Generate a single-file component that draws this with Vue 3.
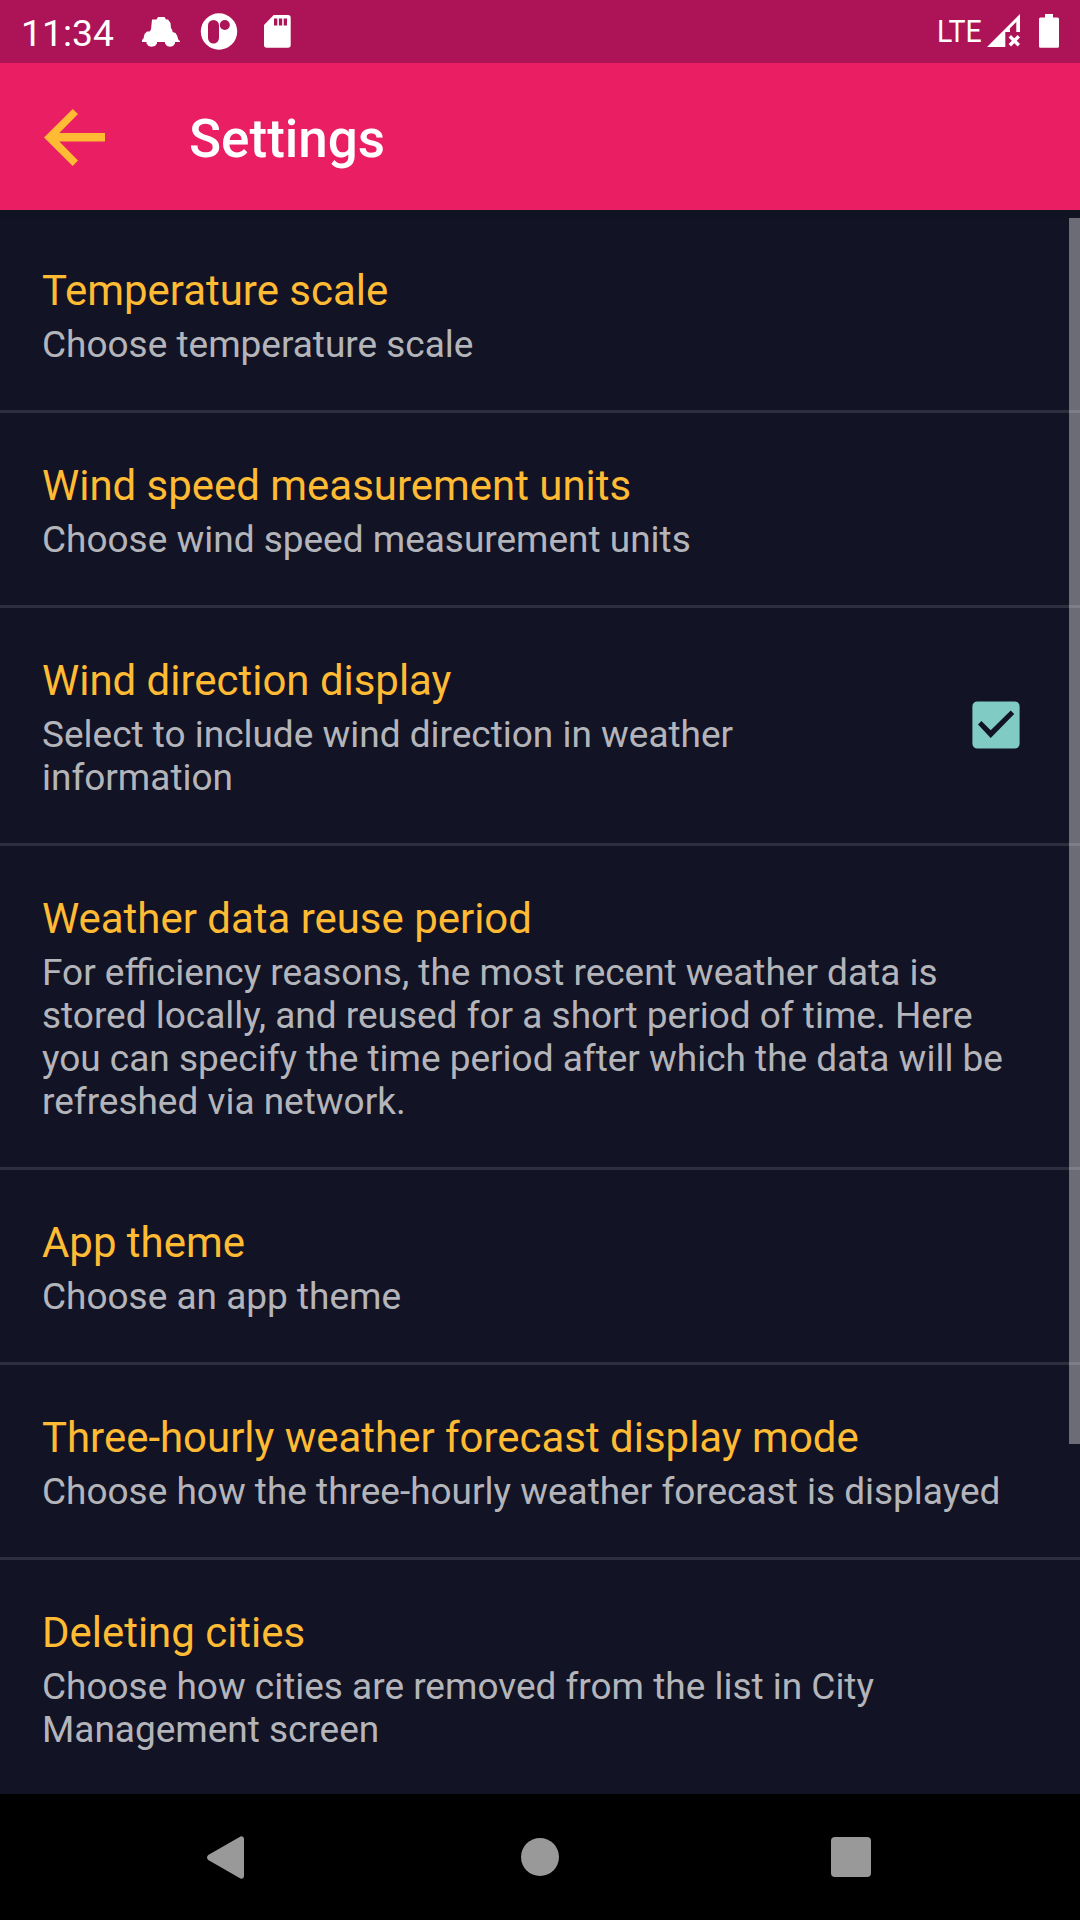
<script setup>
const settings = [
  { title: 'Temperature scale', lines: ['Choose temperature scale'] },
  { title: 'Wind speed measurement units', lines: ['Choose wind speed measurement units'] },
  {
    title: 'Wind direction display',
    lines: ['Select to include wind direction in weather', 'information'],
    checked: true
  },
  {
    title: 'Weather data reuse period',
    lines: [
      'For efficiency reasons, the most recent weather data is',
      'stored locally, and reused for a short period of time. Here',
      'you can specify the time period after which the data will be',
      'refreshed via network.'
    ]
  },
  { title: 'App theme', lines: ['Choose an app theme'] },
  {
    title: 'Three-hourly weather forecast display mode',
    lines: ['Choose how the three-hourly weather forecast is displayed']
  },
  {
    title: 'Deleting cities',
    lines: ['Choose how cities are removed from the list in City', 'Management screen']
  }
]
</script>

<template>
  <div class="screen">
    <header class="status">
      <span class="clock">11:34</span>
      <svg class="car" width="38" height="30" viewBox="0 0 38 30" fill="#fff">
        <path d="M10 2.500h4.500L16 0h6.500L24 2.500h2L28.500 6l.5 5 1.500 2.500V15l3 1 1.500 2.500L36.500 23l1.500 1v1h-5v1.500L31 29l-3 .8-3-.8-2-2.500V25h-8v1.500L13 29l-3.500.8L6.500 29l-2-2.500V25H0v-2l1.500-1.500L2.500 17 5 14.500h2.500L9 12.500z" />
      </svg>
      <svg class="badge" width="38" height="38" viewBox="0 0 38 38">
        <circle cx="19" cy="19.500" r="18.200" fill="#fff" />
        <rect x="8" y="8" width="11" height="23.500" rx="5.500" fill="#ad1457" />
        <circle cx="24.800" cy="13" r="5" fill="#ad1457" />
      </svg>
      <svg class="sd" width="27" height="33" viewBox="0 0 27 33">
        <path d="M9.700 0H24a2.700 2.700 0 0 1 2.700 2.700V30A2.700 2.700 0 0 1 24 32.700H2.700A2.700 2.700 0 0 1 0 30V10z" fill="#fff" />
        <path d="M10 3.500h3.300v7H10zM14.900 3.500h3.300v7h-3.300zM19.700 3.500H23v7h-3.300z" fill="#ad1457" />
      </svg>
      <span class="spacer"></span>
      <span class="lte">LTE</span>
      <svg class="signal" width="33" height="33" viewBox="0 0 33 33">
        <path d="M0 33 33 0v18h-3.700V8L23 14.300V18h-4.700v15z" fill="#fff" />
        <path d="m22.800 22.300 9 9m0-9-9 9" stroke="#fff" stroke-width="3.400" />
      </svg>
      <svg class="battery" width="20" height="34" viewBox="0 0 20 34" fill="#fff">
        <path d="M6 0h8v3.500h4.500A1.500 1.500 0 0 1 20 5v27.200a1.500 1.500 0 0 1-1.500 1.500h-17A1.500 1.500 0 0 1 0 32.200V5a1.500 1.500 0 0 1 1.500-1.500H6z" />
      </svg>
    </header>

    <div class="toolbar">
      <svg class="back" width="61" height="57" viewBox="0 0 61 57">
        <path d="M0 28.500 28.700 0l5.300 5L15.300 24H61v8.500H15.300L34 51.500 28.700 57z" fill="#ffbb33" />
      </svg>
      <h1>Settings</h1>
    </div>

    <main class="list">
      <section v-for="item in settings" :key="item.title" class="item">
        <div class="texts">
          <div class="title">{{ item.title }}</div>
          <div class="summary">
            <div v-for="line in item.lines" :key="line">{{ line }}</div>
          </div>
        </div>
        <svg v-if="item.checked" class="check" width="48" height="48" viewBox="0 0 48 48">
          <rect x=".4" y=".4" width="47.200" height="47.200" rx="5" fill="#80cbc4" />
          <path d="m6 23.400 3.400-3.400 9.300 9.300L38.700 9.500l3.500 3.500-23.500 24z" fill="#121324" />
        </svg>
      </section>
      <div class="scrollbar"></div>
    </main>

    <nav class="nav">
      <svg class="nav-back" width="37" height="43" viewBox="0 0 37 43">
        <path d="M1.200 19 33.500.6Q36.800-.5 37 3v37q-.2 3.500-3.500 2.400L1.200 24Q-1.200 21.500 1.200 19z" fill="#999" />
      </svg>
      <svg class="nav-home" width="38" height="38" viewBox="0 0 38 38">
        <circle cx="19" cy="19" r="19" fill="#999" />
      </svg>
      <svg class="nav-recent" width="40" height="40" viewBox="0 0 40 40">
        <rect width="40" height="40" rx="4" fill="#999" />
      </svg>
    </nav>
  </div>
</template>

<style>
body {
  margin: 0;
  background: #121324;
}
</style>

<style scoped>
.screen {
  width: 1080px;
  height: 1920px;
  display: flex;
  flex-direction: column;
  overflow: hidden;
  background: #121324;
  font-family: Roboto, "Liberation Sans", sans-serif;
  white-space: nowrap;
}
svg {
  display: block;
  flex: none;
}
.status {
  flex: none;
  height: 63px;
  display: flex;
  align-items: flex-start;
  background: #ad1457;
  color: #fff;
}
.clock {
  width: 121px;
  padding: 10px 0 0 21px;
  font-size: 37.300px;
  line-height: 46px;
}
.car {
  margin-top: 17px;
}
.badge {
  margin: 12px 0 0 20px;
}
.sd {
  margin: 15px 0 0 26px;
}
.spacer {
  flex: 1;
}
.lte {
  width: 50px;
  margin-top: 12px;
  font-size: 32px;
  line-height: 38px;
  transform: scaleX(0.89);
  transform-origin: left;
}
.signal {
  margin-top: 14px;
}
.battery {
  margin: 14px 21px 0 19px;
}
.toolbar {
  flex: none;
  height: 147px;
  display: flex;
  align-items: flex-start;
  background: #e91e63;
}
.back {
  margin: 46px 0 0 44px;
}
h1 {
  margin: 46px 0 0 84px;
  color: #fff;
  font-size: 53px;
  line-height: 61px;
  font-weight: 500;
}
.list {
  position: relative;
  flex: 1;
  min-height: 0;
  overflow: hidden;
  padding-top: 8px;
  background: linear-gradient(#101320, #121324 12px);
}
.item {
  display: flex;
  align-items: center;
  justify-content: space-between;
  padding: 48px 60px 44px 42px;
  border-bottom: 3px solid rgba(255, 255, 255, 0.12);
}
.title {
  color: #ffbb33;
  font-size: 41.940px;
  line-height: 49px;
}
.summary {
  margin-top: 8px;
  color: rgba(255, 255, 255, 0.7);
  font-size: 36.970px;
  line-height: 43px;
}
.check {
  margin-bottom: 5px;
}
.scrollbar {
  position: absolute;
  top: 8px;
  right: 0;
  width: 11px;
  height: 1226px;
  background: rgba(255, 255, 255, 0.38);
}
.nav {
  flex: none;
  height: 126px;
  display: flex;
  align-items: center;
  background: #000;
}
.nav-back {
  margin-left: 207px;
}
.nav-home {
  margin-left: 277px;
}
.nav-recent {
  margin-left: 272px;
}
</style>
